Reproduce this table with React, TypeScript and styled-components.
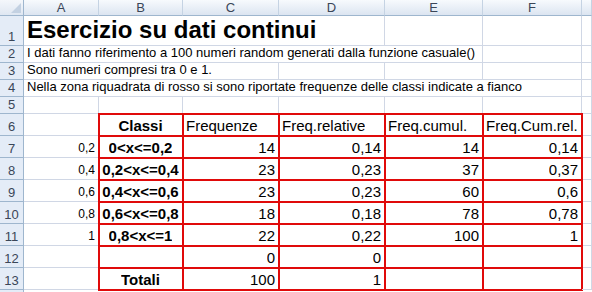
import React from "react";
import styled, { createGlobalStyle, css } from "styled-components";

type Align = "left" | "center" | "right";

interface CellSpec {
  text?: string;
  align?: Align;
  bold?: boolean;
  size?: number;
  span?: number;
  boxed?: boolean;
}

const COLUMNS = ["A", "B", "C", "D", "E", "F", ""];

const num = (text: string): CellSpec => ({ text, align: "right", boxed: true });
const head = (text: string): CellSpec => ({ text, align: "left", boxed: true });
const cls = (text: string): CellSpec => ({ text, align: "center", bold: true, boxed: true });
const side = (text?: string): CellSpec => ({ text, align: "right", size: 12 });
const boxedEmpty: CellSpec = { boxed: true };

const ROWS: CellSpec[][] = [
  [{ text: "Esercizio su dati continui", bold: true, size: 24, span: 4 }, {}, {}, {}],
  [{ text: "I dati fanno riferimento a 100 numeri random generati dalla funzione casuale()", span: 5 }, {}, {}],
  [{ text: "Sono numeri compresi tra 0 e 1.", span: 3 }, {}, {}, {}, {}],
  [{ text: "Nella zona riquadrata di rosso si sono riportate frequenze delle classi indicate a fianco", span: 6 }, {}],
  [{}, {}, {}, {}, {}, {}, {}],
  [side(), cls("Classi"), head("Frequenze"), head("Freq.relative"), head("Freq.cumul."), head("Freq.Cum.rel."), {}],
  [side("0,2"), cls("0<x<=0,2"), num("14"), num("0,14"), num("14"), num("0,14"), {}],
  [side("0,4"), cls("0,2<x<=0,4"), num("23"), num("0,23"), num("37"), num("0,37"), {}],
  [side("0,6"), cls("0,4<x<=0,6"), num("23"), num("0,23"), num("60"), num("0,6"), {}],
  [side("0,8"), cls("0,6<x<=0,8"), num("18"), num("0,18"), num("78"), num("0,78"), {}],
  [side("1"), cls("0,8<x<=1"), num("22"), num("0,22"), num("100"), num("1"), {}],
  [side(), boxedEmpty, num("0"), num("0"), boxedEmpty, boxedEmpty, {}],
  [side(), cls("Totali"), num("100"), num("1"), boxedEmpty, boxedEmpty, {}],
];

const GlobalStyle = createGlobalStyle`
  html, body {
    margin: 0;
    padding: 0;
    background: #ffffff;
  }
  body {
    font-family: "Liberation Sans", Arial, sans-serif;
  }
`;

const Sheet = styled.div`
  display: grid;
  grid-template-columns: 24px 75px 84px 96px 106px 98px 99px 10px;
  grid-template-rows: 16px 30px repeat(4, 17px) repeat(8, 22px) 2px;
  width: 592px;
  height: 292px;
  overflow: hidden;
  background: #ffffff;
`;

const headerText = css`
  font-family: "Liberation Sans", Arial, sans-serif;
  font-size: 13px;
  color: #3a4658;
  box-sizing: border-box;
`;

const Corner = styled.div`
  position: relative;
  background: linear-gradient(#f4f7fb, #dfe7f2);
  border-right: 1px solid #9eb6ce;
  border-bottom: 1px solid #9eb6ce;
  box-sizing: border-box;

  &::after {
    content: "";
    position: absolute;
    right: 2px;
    bottom: 2px;
    border-left: 10px solid transparent;
    border-bottom: 10px solid #c3d1e2;
  }
`;

const ColHead = styled.div`
  ${headerText}
  display: flex;
  align-items: center;
  justify-content: center;
  background: linear-gradient(#f7fafd, #dce5f1);
  border-right: 1px solid #c5d3e3;
  border-bottom: 1px solid #9eb6ce;
`;

const RowHead = styled.div`
  ${headerText}
  display: flex;
  align-items: flex-end;
  justify-content: center;
  padding-bottom: 1px;
  line-height: 15px;
  background: #e4ecf7;
  border-right: 1px solid #9eb6ce;
  border-bottom: 1px solid #9eb6ce;
`;

/* sliver of the next row peeking in at the bottom edge */
const EdgeHead = styled.div`
  background: #e4ecf7;
  border-right: 1px solid #9eb6ce;
  box-sizing: border-box;
`;

const EdgeRow = styled.div`
  grid-column: span 7;
`;

const Cell = styled.div<{ $align: Align; $bold: boolean; $size: number; $span: number; $boxed: boolean }>`
  grid-column: span ${p => p.$span};
  display: flex;
  align-items: flex-end;
  justify-content: ${p => (p.$align === "right" ? "flex-end" : p.$align === "center" ? "center" : "flex-start")};
  box-sizing: border-box;
  padding: 0 ${p => (p.$align === "center" ? 0 : 3)}px 1px;
  border-right: 1px solid #d0d7e5;
  border-bottom: 1px solid #d0d7e5;
  font-size: ${p => p.$size}px;
  font-weight: ${p => (p.$bold ? 700 : 400)};
  line-height: 1.15;
  color: #000000;
  white-space: nowrap;
  overflow: hidden;

  ${p =>
    p.$boxed &&
    css`
      overflow: visible;
      outline: 2px solid #e00a0a;
      outline-offset: -1px;
    `}
`;

const Text = styled.span`
  overflow: hidden;
`;

export default function App() {
  return (
    <>
      <GlobalStyle />
      <Sheet>
        <Corner />
        {COLUMNS.map((c, i) => (
          <ColHead key={i}>{c}</ColHead>
        ))}
        {ROWS.map((row, r) => (
          <React.Fragment key={r}>
            <RowHead>{r + 1}</RowHead>
            {row.map((cell, c) => (
              <Cell
                key={c}
                $align={cell.align ?? "left"}
                $bold={!!cell.bold}
                $size={cell.size ?? (r >= 5 ? 15 : 13)}
                $span={cell.span ?? 1}
                $boxed={!!cell.boxed}
              >
                <Text>{cell.text}</Text>
              </Cell>
            ))}
          </React.Fragment>
        ))}
        <EdgeHead />
        <EdgeRow />
      </Sheet>
    </>
  );
}
